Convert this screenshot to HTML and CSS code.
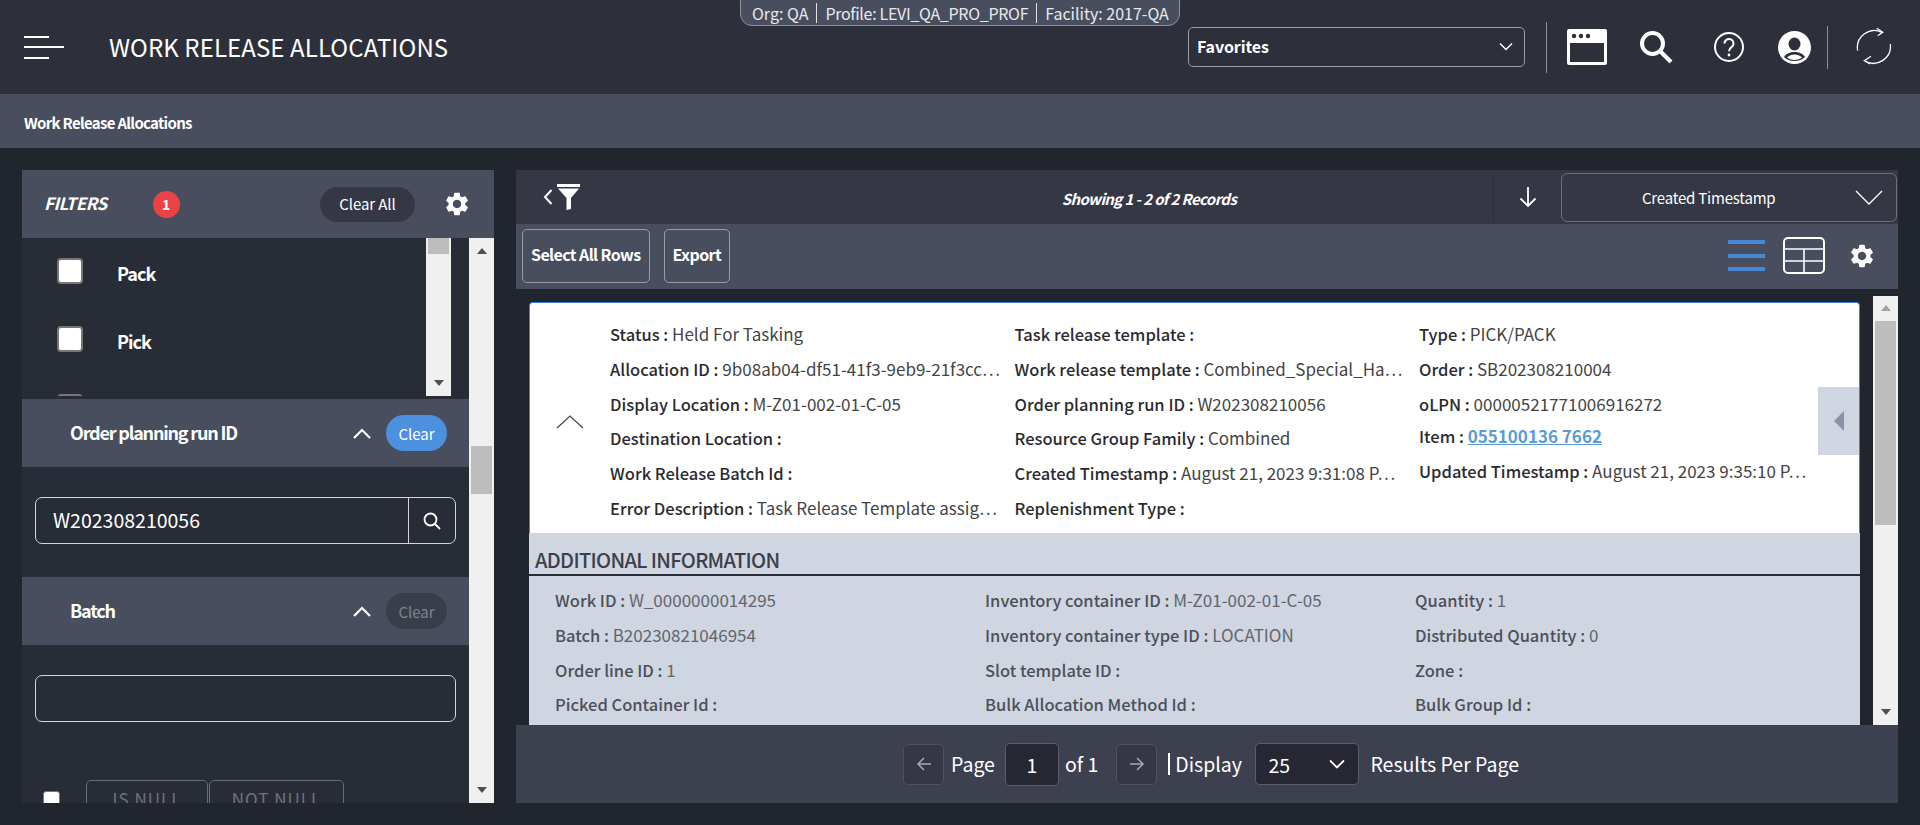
FILE: index.html
```html
<!DOCTYPE html>
<html lang="en">
<head>
  <meta charset="UTF-8">
  <meta name="viewport" content="width=device-width, initial-scale=1.0">
  <title>Work Release Allocations</title>
  <link rel="stylesheet" href="styles.css">
</head>
<body>
  <header class="top-bar">
    <div class="menu-icon"><span class="short"></span><span></span><span class="short"></span></div>
    <h1 class="page-title">WORK RELEASE ALLOCATIONS</h1>

    <div class="context-pill">
      <span>Org: QA</span>
      <span class="profile-name">Profile: LEVI_QA_PRO_PROF</span>
      <span>Facility: 2017-QA</span>
    </div>

    <div class="favorites">
      <span>Favorites</span>
      <svg width="14" height="9" viewBox="0 0 14 9"><path d="M1 1.500l6 6 6-6" fill="none" stroke="#fff" stroke-width="1.400"/></svg>
    </div>
    <div class="top-divider tall"></div>
    <svg class="top-icon window-icon" width="40" height="36" viewBox="0 0 40 36">
      <path fill-rule="evenodd" d="M2 0h36a2 2 0 0 1 2 2v32a2 2 0 0 1-2 2H2a2 2 0 0 1-2-2V2a2 2 0 0 1 2-2zM3 14v19h34V14z" fill="#fff"/>
      <circle cx="7" cy="7" r="2.200" fill="#2d2f3b"/><circle cx="14" cy="7" r="2.200" fill="#2d2f3b"/><circle cx="21" cy="7" r="2.200" fill="#2d2f3b"/>
    </svg>
    <svg class="top-icon search-icon" width="34" height="34" viewBox="0 0 34 34">
      <circle cx="13.500" cy="13.500" r="10.500" fill="none" stroke="#fff" stroke-width="4"/>
      <path d="M21 21l11 11" stroke="#fff" stroke-width="4"/>
    </svg>
    <svg class="top-icon help-icon" width="30" height="30" viewBox="0 0 30 30">
      <circle cx="15" cy="15" r="14" fill="none" stroke="#fff" stroke-width="2"/>
      <path d="M10.500 11.500a4.500 4.500 0 1 1 7 3.700c-1.600 1.100-2.500 2-2.500 4" fill="none" stroke="#fff" stroke-width="2"/>
      <circle cx="15" cy="23" r="1.400" fill="#fff"/>
    </svg>
    <svg class="top-icon user-icon" width="33" height="33" viewBox="0 0 33 33">
      <circle cx="16.500" cy="16.500" r="16.500" fill="#fff"/>
      <ellipse cx="16.500" cy="13" rx="6" ry="6.500" fill="#2d2f3b"/>
      <path d="M6 26c2-3.500 6-5 10.500-5s8.500 1.500 10.500 5c-2.500 2.500-6.500 4-10.500 4S8.500 28.500 6 26z" fill="#2d2f3b"/>
      <path d="M9 26.500c2-2 4.500-3 7.500-3s5.500 1 7.500 3c-2 1.500-4.500 2.500-7.500 2.500S11 28 9 26.500z" fill="#fff"/>
    </svg>
    <div class="top-divider"></div>
    <svg class="top-icon refresh-icon" width="36" height="40" viewBox="0 0 36 40">
      <path d="M1.700 23.700A17 17 0 0 1 26 5.300M34.300 17A17 17 0 0 1 9 34" fill="none" stroke="#fff" stroke-width="1.300"/>
      <path d="M20.700 1.300l6 4-5 3.400M15 29.300l-6.700 4.400L14 37" fill="none" stroke="#fff" stroke-width="1.300"/>
    </svg>
  </header>

  <nav class="sub-bar">Work Release Allocations</nav>

  <main class="content">
    <aside class="filter-panel">
      <div class="filter-head">
        <span class="filter-title">FILTERS</span>
        <span class="filter-badge">1</span>
        <button class="clear-all">Clear All</button>
        <svg class="gear" width="28" height="28" viewBox="0 0 24 24"><path d="M19.140 12.940c.04-.3.06-.61.06-.94 0-.32-.02-.64-.07-.94l2.030-1.580c.18-.14.23-.41.12-.61l-1.920-3.320c-.12-.22-.37-.29-.59-.22l-2.390.96c-.5-.38-1.030-.7-1.620-.94l-.36-2.540c-.04-.24-.24-.41-.48-.41h-3.840c-.24 0-.43.17-.47.41l-.36 2.540c-.59.24-1.130.57-1.620.94l-2.390-.96c-.22-.08-.47 0-.59.22L2.740 8.870c-.12.21-.08.47.12.61l2.030 1.580c-.05.3-.09.63-.09.94s.02.64.07.94l-2.030 1.580c-.18.14-.23.41-.12.61l1.920 3.320c.12.22.37.29.59.22l2.390-.96c.5.38 1.030.7 1.620.94l.36 2.540c.05.24.24.41.48.41h3.840c.24 0 .44-.17.47-.41l.36-2.540c.59-.24 1.130-.56 1.620-.94l2.390.96c.22.08.47 0 .59-.22l1.920-3.320c.12-.22.07-.47-.12-.61l-2.010-1.580zM12 15.600c-1.980 0-3.600-1.620-3.600-3.600s1.620-3.600 3.600-3.600 3.600 1.620 3.600 3.600-1.620 3.600-3.600 3.600z" fill="#fff"/></svg>
      </div>
      <div class="filter-body">
        <div class="filter-scroll">
          <div class="check-list">
            <div class="check-items">
              <div class="check-row"><span class="check-box"></span><span class="check-label">Pack</span></div>
              <div class="check-row"><span class="check-box"></span><span class="check-label">Pick</span></div>
              <div class="check-row"><span class="check-box"></span></div>
            </div>
            <div class="scrollbar inner-bar">
              <div class="thumb inner-thumb"></div>
              <span class="arrow-down"></span>
            </div>
          </div>

          <div class="section-head">
            <span class="section-title">Order planning run ID</span>
            <svg width="18" height="11" viewBox="0 0 18 11"><path d="M1 10l8-8 8 8" fill="none" stroke="#fff" stroke-width="2.200"/></svg>
            <button class="clear-btn active">Clear</button>
          </div>
          <div class="section-body">
            <div class="search-input">
              <span class="search-value">W202308210056</span>
              <span class="search-btn">
                <svg width="18" height="18" viewBox="0 0 18 18"><circle cx="7.500" cy="7.500" r="6" fill="none" stroke="#fff" stroke-width="1.800"/><path d="M12 12l5 5" stroke="#fff" stroke-width="1.800"/></svg>
              </span>
            </div>
          </div>

          <div class="section-head">
            <span class="section-title">Batch</span>
            <svg width="18" height="11" viewBox="0 0 18 11"><path d="M1 10l8-8 8 8" fill="none" stroke="#fff" stroke-width="2.200"/></svg>
            <button class="clear-btn">Clear</button>
          </div>
          <div class="section-body">
            <div class="search-input"></div>
          </div>
          <div class="null-row">
            <span class="null-check"></span>
            <span class="null-btn">IS NULL</span>
            <span class="null-btn wide">NOT NULL</span>
          </div>
        </div>
        <div class="scrollbar outer-bar">
          <span class="arrow-up"></span>
          <div class="thumb outer-thumb"></div>
          <span class="arrow-down"></span>
        </div>
      </div>
    </aside>

    <section class="results">
      <div class="results-top">
        <div class="filter-toggle">
          <svg width="10" height="18" viewBox="0 0 10 18"><path d="M8.500 2L2 9l6.500 7" fill="none" stroke="#fff" stroke-width="2"/></svg>
          <svg width="23" height="26" viewBox="0 0 23 26"><path d="M0 0h23v3H0zM1 4.500h21L14 14v11l-4.500 1V14z" fill="#fff"/></svg>
        </div>
        <div class="record-count">Showing 1 - 2 of 2 Records</div>
        <div class="sort-arrow">
          <svg width="18" height="22" viewBox="0 0 18 22"><path d="M9 1v19M1.500 12.500L9 20l7.500-7.500" fill="none" stroke="#fff" stroke-width="1.800"/></svg>
        </div>
        <div class="sort-select">
          <span>Created Timestamp</span>
          <svg width="28" height="15" viewBox="0 0 28 15"><path d="M1 1l13 13L27 1" fill="none" stroke="#fff" stroke-width="1.300"/></svg>
        </div>
      </div>

      <div class="results-tools">
        <button class="tool-btn">Select All Rows</button>
        <button class="tool-btn">Export</button>
        <div class="view-icons">
          <div class="list-icon"><span></span><span></span><span></span></div>
          <svg class="table-icon" width="42" height="37" viewBox="0 0 42 37">
            <rect x="1" y="1" width="40" height="35" rx="4" fill="none" stroke="#fff" stroke-width="2"/>
            <path d="M1 12h40M1 24h40M21 12v24" stroke="#fff" stroke-width="1.600"/>
          </svg>
          <svg class="gear small" width="28" height="28" viewBox="0 0 24 24"><path d="M19.140 12.940c.04-.3.06-.61.06-.94 0-.32-.02-.64-.07-.94l2.030-1.580c.18-.14.23-.41.12-.61l-1.920-3.320c-.12-.22-.37-.29-.59-.22l-2.390.96c-.5-.38-1.030-.7-1.620-.94l-.36-2.540c-.04-.24-.24-.41-.48-.41h-3.840c-.24 0-.43.17-.47.41l-.36 2.540c-.59.24-1.130.57-1.620.94l-2.390-.96c-.22-.08-.47 0-.59.22L2.740 8.870c-.12.21-.08.47.12.61l2.030 1.580c-.05.3-.09.63-.09.94s.02.64.07.94l-2.030 1.580c-.18.14-.23.41-.12.61l1.920 3.320c.12.22.37.29.59.22l2.390-.96c.5.38 1.030.7 1.620.94l.36 2.540c.05.24.24.41.48.41h3.840c.24 0 .44-.17.47-.41l.36-2.540c.59-.24 1.130-.56 1.620-.94l2.390.96c.22.08.47 0 .59-.22l1.920-3.320c.12-.22.07-.47-.12-.61l-2.010-1.580zM12 15.600c-1.980 0-3.600-1.620-3.600-3.600s1.620-3.600 3.600-3.600 3.600 1.620 3.600 3.600-1.620 3.600-3.600 3.600z" fill="#fff"/></svg>
        </div>
      </div>

      <div class="results-list">
        <div class="list-scroll">
          <article class="card">
            <div class="card-main">
              <svg class="card-chevron" width="28" height="14" viewBox="0 0 28 14"><path d="M1 13L14 1l13 12" fill="none" stroke="#444" stroke-width="1.200"/></svg>
              <div class="card-fields">
                <div class="field-col">
                  <div class="field"><b>Status :</b> Held For Tasking</div>
                  <div class="field"><b>Allocation ID :</b> 9b08ab04-df51-41f3-9eb9-21f3cc…</div>
                  <div class="field"><b>Display Location :</b> M-Z01-002-01-C-05</div>
                  <div class="field"><b>Destination Location :</b></div>
                  <div class="field"><b>Work Release Batch Id :</b></div>
                  <div class="field"><b>Error Description :</b> Task Release Template assig…</div>
                </div>
                <div class="field-col">
                  <div class="field"><b>Task release template :</b></div>
                  <div class="field"><b>Work release template :</b> Combined_Special_Ha…</div>
                  <div class="field"><b>Order planning run ID :</b> W202308210056</div>
                  <div class="field"><b>Resource Group Family :</b> Combined</div>
                  <div class="field"><b>Created Timestamp :</b> August 21, 2023 9:31:08 P…</div>
                  <div class="field"><b>Replenishment Type :</b></div>
                </div>
                <div class="field-col">
                  <div class="field"><b>Type :</b> PICK/PACK</div>
                  <div class="field"><b>Order :</b> SB202308210004</div>
                  <div class="field"><b>oLPN :</b> 00000521771006916272</div>
                  <div class="field item-field"><b>Item :</b> <a class="item-link">055100136 7662</a></div>
                  <div class="field"><b>Updated Timestamp :</b> August 21, 2023 9:35:10 P…</div>
                </div>
              </div>
              <div class="side-tab"><span></span></div>
            </div>
            <div class="card-extra">
              <h2 class="extra-title">ADDITIONAL INFORMATION</h2>
              <div class="extra-fields">
                <div class="field"><b>Work ID :</b> W_0000000014295</div>
                <div class="field"><b>Inventory container ID :</b> M-Z01-002-01-C-05</div>
                <div class="field"><b>Quantity :</b> 1</div>
                <div class="field"><b>Batch :</b> B20230821046954</div>
                <div class="field"><b>Inventory container type ID :</b> LOCATION</div>
                <div class="field"><b>Distributed Quantity :</b> 0</div>
                <div class="field"><b>Order line ID :</b> 1</div>
                <div class="field"><b>Slot template ID :</b></div>
                <div class="field"><b>Zone :</b></div>
                <div class="field"><b>Picked Container Id :</b></div>
                <div class="field"><b>Bulk Allocation Method Id :</b></div>
                <div class="field"><b>Bulk Group Id :</b></div>
              </div>
            </div>
          </article>
        </div>
        <div class="scrollbar list-bar">
          <span class="arrow-up faded"></span>
          <div class="thumb list-thumb"></div>
          <span class="arrow-down"></span>
        </div>
      </div>

      <div class="pager">
        <span class="page-btn"><svg width="16" height="14" viewBox="0 0 16 14"><path d="M15 7H2M8 1L2 7l6 6" fill="none" stroke="#a5a8b1" stroke-width="1.500"/></svg></span>
        <span class="pager-text page-label">Page</span>
        <span class="page-input">1</span>
        <span class="pager-text page-of">of 1</span>
        <span class="page-btn"><svg width="16" height="14" viewBox="0 0 16 14"><path d="M1 7h13M8 1l6 6-6 6" fill="none" stroke="#a5a8b1" stroke-width="1.500"/></svg></span>
        <span class="pager-text display-text">Display</span>
        <span class="page-size"><span>25</span><svg width="16" height="10" viewBox="0 0 16 10"><path d="M1 1.500l7 7 7-7" fill="none" stroke="#fff" stroke-width="1.800"/></svg></span>
        <span class="pager-text results-label">Results Per Page</span>
      </div>
    </section>
  </main>
</body>
</html>
```

FILE: styles.css
```css
* {
  box-sizing: border-box;
}

body {
  margin: 0;
  height: 825px;
  overflow: hidden;
  background-color: #21252e;
  font-family: "Noto Sans CJK KR", "Noto Sans", sans-serif;
  color: #fff;
}

button {
  font-family: inherit;
  border: none;
  padding: 0;
}

/* top bar */
.top-bar {
  position: relative;
  display: flex;
  align-items: center;
  height: 94px;
  padding: 0 28px 0 24px;
  background-color: #2d2f3b;
}

.menu-icon {
  display: flex;
  flex-direction: column;
  gap: 8.500px;
  width: 40px;
}

.menu-icon span {
  display: block;
  height: 2px;
  background-color: #fff;
}

.menu-icon .short {
  width: 25px;
}

.page-title {
  margin: 0 0 2px 45px;
  font-size: 24px;
  font-weight: 400;
  letter-spacing: 0.1px;
}

.context-pill {
  position: absolute;
  top: -1px;
  left: 740px;
  display: flex;
  align-items: center;
  width: 440px;
  height: 27px;
  padding: 0 10px 0 11px;
  background-color: #484e5e;
  border: 1px solid #8d919c;
  border-radius: 0 0 12px 12px;
  font-size: 16px;
  white-space: nowrap;
  color: #e8e9ec;
}

.context-pill span + span {
  margin-left: 8px;
  padding-left: 8px;
  border-left: 1px solid #e0e0e0;
  line-height: 20px;
}

.context-pill .profile-name {
  letter-spacing: -0.3px;
}

.favorites {
  display: flex;
  align-items: center;
  justify-content: space-between;
  width: 337px;
  height: 40px;
  margin-left: auto;
  margin-right: 21px;
  padding: 0 11px 2px 8px;
  border: 1px solid #9a9ca3;
  border-radius: 5px;
  font-size: 16px;
  font-weight: 700;
  letter-spacing: -0.1px;
}

.top-divider {
  width: 1px;
  height: 43px;
  background-color: #8d919c;
}

.top-divider.tall {
  height: 51px;
}

.window-icon {
  margin-left: 20px;
}

.search-icon {
  margin-left: 32px;
}

.help-icon {
  margin-left: 41px;
}

.user-icon {
  margin-left: 34px;
  margin-right: 16px;
}

.refresh-icon {
  margin-left: 28px;
}

.sub-bar {
  display: flex;
  align-items: center;
  height: 54px;
  padding: 2px 0 0 24px;
  background-color: #484e5e;
  font-size: 15px;
  font-weight: 700;
  letter-spacing: -0.7px;
}

/* main area */
.content {
  display: flex;
  gap: 22px;
  height: 633px;
  margin: 22px 22px 0;
}

.filter-panel {
  display: flex;
  flex-direction: column;
  flex: none;
  width: 472px;
  background-color: #282c36;
}

.filter-head {
  display: flex;
  align-items: center;
  flex: none;
  height: 68px;
  padding-left: 22px;
  background-color: #484e5e;
}

.filter-title {
  padding-bottom: 4px;
  font-size: 17px;
  font-weight: 700;
  font-style: italic;
  letter-spacing: -0.5px;
}

.filter-badge {
  display: flex;
  align-items: center;
  justify-content: center;
  width: 27px;
  height: 27px;
  margin-left: 46px;
  border-radius: 50%;
  background-color: #ed4245;
  font-size: 14px;
  font-weight: 700;
}

.clear-all {
  width: 95px;
  height: 35px;
  margin-left: auto;
  padding-bottom: 2px;
  border-radius: 18px;
  background-color: #353844;
  color: #fff;
  font-size: 15px;
  letter-spacing: -0.1px;
}

.gear {
  margin-left: 28px;
  margin-right: 23px;
}

.filter-body {
  display: flex;
  flex: 1;
  min-height: 0;
}

.filter-scroll {
  flex: 1;
  min-width: 0;
  overflow: hidden;
}

.check-list {
  display: flex;
  height: 161px;
  padding-right: 18px;
}

.check-items {
  flex: 1;
  height: 158px;
  overflow: hidden;
  padding: 20px 0 0 35px;
}

.check-row {
  display: flex;
  align-items: center;
  gap: 34px;
  height: 26px;
  margin-bottom: 42px;
}

.check-label {
  padding-top: 4px;
  font-size: 18px;
  font-weight: 700;
  letter-spacing: -1px;
}

.check-box {
  flex: none;
  width: 26px;
  height: 26px;
  background-color: #fff;
  border: 2px solid #777;
  border-radius: 4px;
}

/* fake scrollbars, the page itself does not scroll */
.scrollbar {
  display: flex;
  flex-direction: column;
  align-items: center;
  flex: none;
  width: 25px;
  background-color: #f0f0f0;
}

.thumb {
  flex: none;
  width: 21px;
  background-color: #bdbdbd;
}

.inner-bar {
  height: 158px;
}

.inner-thumb {
  height: 16px;
}

.arrow-up,
.arrow-down {
  flex: none;
  width: 0;
  height: 0;
  border-left: 5.500px solid transparent;
  border-right: 5.500px solid transparent;
}

.arrow-up {
  border-bottom: 6px solid #505050;
}

.arrow-up.faded {
  border-bottom-color: #a3a3a3;
}

.arrow-down {
  margin-top: auto;
  margin-bottom: 10px;
  border-top: 6px solid #505050;
}

.outer-bar .arrow-up {
  margin-top: 10px;
}

.outer-thumb {
  height: 48px;
  margin-top: 192px;
}

.section-head {
  display: flex;
  align-items: center;
  height: 68px;
  padding-left: 48px;
  background-color: #484e5e;
}

.section-title {
  flex: 1;
  padding-bottom: 2px;
  font-size: 18px;
  font-weight: 700;
  letter-spacing: -1.2px;
}

.clear-btn {
  width: 61px;
  height: 36px;
  margin: 0 22px 0 15px;
  border-radius: 18px;
  background-color: #393e4b;
  color: #7f838e;
  font-size: 15px;
}

.clear-btn.active {
  background-color: #4e90e0;
  color: #fff;
}

.section-body {
  padding: 30px 13px 33px;
}

.search-input {
  display: flex;
  align-items: center;
  justify-content: space-between;
  height: 47px;
  border: 1px solid #d4d5d8;
  border-radius: 7px;
  padding-left: 17px;
}

.search-value {
  padding-bottom: 2px;
  font-size: 19.500px;
}

.search-btn {
  display: flex;
  align-items: center;
  justify-content: center;
  width: 47px;
  height: 100%;
  border-left: 1px solid #d4d5d8;
}

.null-row {
  display: flex;
  align-items: flex-start;
  height: 40px;
  margin-top: 25px;
  padding-left: 21px;
}

.null-check {
  width: 17px;
  height: 17px;
  margin: 11px 26px 0 0;
  background-color: #fff;
  border: 1px solid #777;
  border-radius: 3px;
}

.null-btn {
  display: flex;
  align-items: center;
  justify-content: center;
  width: 122px;
  height: 40px;
  margin-right: 1px;
  padding-bottom: 4px;
  border: 1px solid #6a6d76;
  border-radius: 5px;
  font-size: 17px;
  letter-spacing: 1px;
  color: #6f737d;
}

.null-btn.wide {
  width: 135px;
}

/* results */
.results {
  display: flex;
  flex-direction: column;
  flex: 1;
  min-width: 0;
}

.results-top {
  display: flex;
  align-items: center;
  flex: none;
  height: 54px;
  background-color: #353844;
}

.filter-toggle {
  display: flex;
  align-items: center;
  gap: 4px;
  width: 65px;
  padding: 0 0 0 27px;
}

.record-count {
  flex: 1;
  padding: 2px 0 0 224px;
  text-align: center;
  font-size: 15px;
  font-weight: 700;
  font-style: italic;
  letter-spacing: -0.63px;
}

.sort-arrow {
  display: flex;
  align-items: center;
  justify-content: center;
  width: 68px;
  height: 49px;
  border-left: 1px solid #2b2e38;
}

.sort-select {
  display: flex;
  align-items: center;
  justify-content: space-between;
  width: 336px;
  height: 49px;
  margin-right: 1px;
  padding: 0 13px 0 80px;
  border: 1px solid #6c6f78;
  border-radius: 6px;
  font-size: 15px;
  letter-spacing: -0.2px;
}

.results-tools {
  display: flex;
  align-items: center;
  flex: none;
  gap: 14px;
  height: 65px;
  padding: 0 0 2px 6px;
  background-color: #484e5e;
}

.tool-btn {
  height: 54px;
  padding: 0 8px 3px;
  border: 1px solid #9a9ca3;
  border-radius: 5px;
  background: transparent;
  color: #fff;
  font-size: 16px;
  font-weight: 700;
  letter-spacing: -0.6px;
}

.view-icons {
  display: flex;
  align-items: center;
  margin-left: auto;
}

.list-icon {
  display: flex;
  flex-direction: column;
  gap: 9.500px;
  width: 37px;
}

.list-icon span {
  height: 4px;
  background-color: #4a86d8;
}

.table-icon {
  margin-left: 18px;
}

.gear.small {
  margin: 0 22px 0 23px;
}

.results-list {
  display: flex;
  flex: 1;
  min-height: 0;
  padding-top: 7px;
}

.list-scroll {
  flex: 1;
  min-width: 0;
  padding: 6px 13px 0;
  overflow: hidden;
}

.list-bar {
  height: 429px;
}

.list-bar .arrow-up {
  margin-top: 9px;
}

.list-thumb {
  height: 204px;
  margin-top: 10px;
}

.card-main {
  display: flex;
  position: relative;
  height: 231px;
  background-color: #fff;
  border: 1px solid #3a82e0;
  border-bottom: none;
  border-radius: 4px 4px 0 0;
  color: #444;
}

.card-chevron {
  flex: none;
  margin: 112px 26px 0;
}

.card-fields {
  display: flex;
  flex: 1;
  min-width: 0;
  margin-top: 14px;
}

.field-col {
  width: 404.500px;
  padding-right: 10px;
}

.card-main .field {
  height: 34.800px;
  line-height: 34.800px;
}

.field {
  font-size: 17px;
  white-space: nowrap;
}

.field b {
  font-size: 16.500px;
  font-weight: 500;
  color: #2b2b2f;
}

.card-main .item-field {
  height: 33px;
  line-height: 30px;
}

.item-link {
  font-weight: 700;
  color: #5b9bd5;
  text-decoration: underline;
}

.side-tab {
  position: absolute;
  top: 84px;
  right: 0;
  display: flex;
  align-items: center;
  justify-content: center;
  width: 41px;
  height: 68px;
  background-color: #cfd5e1;
}

.side-tab span {
  width: 0;
  height: 0;
  border-top: 10px solid transparent;
  border-bottom: 10px solid transparent;
  border-right: 10px solid #8a92a6;
}

.card-extra {
  height: 192px;
  background-color: #cfd5e1;
}

.extra-title {
  height: 43px;
  margin: 0;
  padding: 13px 0 0 6px;
  border-bottom: 2px solid #2a2d36;
  font-size: 20px;
  line-height: 28px;
  font-weight: 500;
  letter-spacing: -0.65px;
  color: #3c3f49;
}

.extra-fields {
  display: grid;
  grid-template-columns: 430px 430px 1fr;
  grid-auto-rows: 34.800px;
  padding: 7px 0 0 26px;
  line-height: 34.800px;
  color: #62656c;
}

.extra-fields .field b {
  color: #4d5058;
}

.pager {
  display: flex;
  align-items: center;
  flex: none;
  height: 78px;
  margin-top: -1px;
  padding-left: 387px;
  background-color: #3d404f;
  font-size: 19.500px;
}

.pager-text {
  padding-bottom: 2px;
}

.page-label {
  margin: 0 10px 0 7px;
}

.page-of {
  margin: 0 18px 0 6px;
}

.display-text {
  margin: 0 13.500px 0 11px;
  padding: 0 0 0 5px;
  border-left: 2px solid #fff;
  line-height: 22px;
}

.results-label {
  margin-left: 11px;
}

.page-btn {
  display: flex;
  align-items: center;
  justify-content: center;
  width: 41px;
  height: 41px;
  background-color: #353844;
  border: 1px solid #4f525e;
  border-radius: 5px;
}

.page-input {
  display: flex;
  align-items: center;
  justify-content: center;
  width: 54px;
  height: 43px;
  background-color: #272733;
  border: 1px solid #5c5f69;
  border-radius: 5px;
}

.page-size {
  display: flex;
  align-items: center;
  justify-content: space-between;
  width: 104px;
  height: 42px;
  padding: 0 13px 0 12px;
  background-color: #272733;
  border: 1px solid #5c5f69;
  border-radius: 5px;
}
```
